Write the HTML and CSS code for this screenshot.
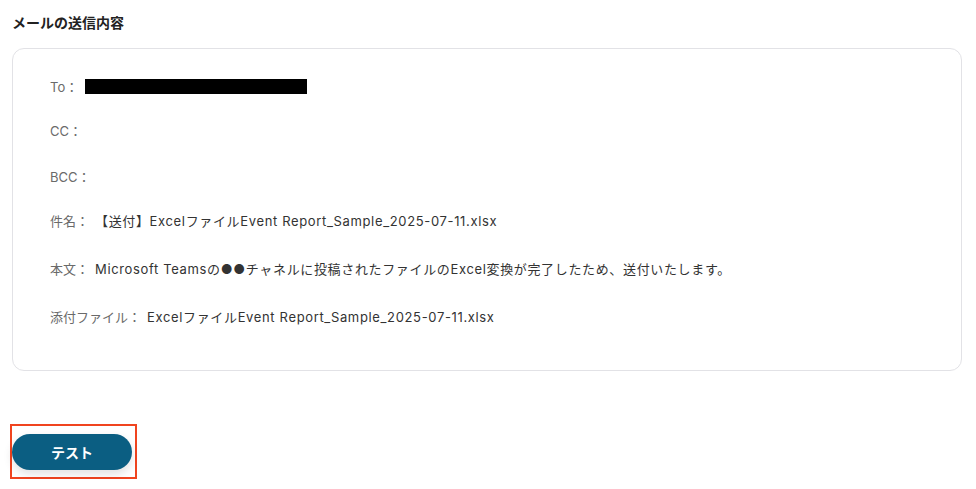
FILE: index.html
```html
<!DOCTYPE html>
<html lang="ja">
  <head>
    <meta charset="UTF-8" />
    <meta name="viewport" content="width=device-width, initial-scale=1.0" />
    <title>メールの送信内容</title>
    <link rel="stylesheet" href="styles.css">
  </head>
  <body>
    <h3 class="title">メールの送信内容</h3>

    <div class="card">
      <div class="row">
        <span class="label">To：</span>
        <span class="redacted"></span>
      </div>
      <div class="row row-wide">
        <span class="label">CC：</span>
      </div>
      <div class="row">
        <span class="label">BCC：</span>
      </div>
      <div class="row row-tall">
        <span class="label">件名：</span>
        <span class="value">【送付】ExcelファイルEvent Report_Sample_2025-07-11.xlsx</span>
      </div>
      <div class="row row-tall">
        <span class="label">本文：</span>
        <span class="value">Microsoft Teamsの●●チャネルに投稿されたファイルのExcel変換が完了したため、送付いたします。</span>
      </div>
      <div class="row">
        <span class="label">添付ファイル：</span>
        <span class="value">ExcelファイルEvent Report_Sample_2025-07-11.xlsx</span>
      </div>
    </div>

    <div class="actions">
      <div class="highlight">
        <button class="btn">テスト</button>
      </div>
    </div>
  </body>
</html>
```

FILE: styles.css
```css
body {
  margin: 0;
  padding: 0 14px 0 12px;
  background: #fff;
  font-family: Inter, "Noto Sans CJK JP", sans-serif;
  color: #333;
}
.title {
  margin: 0;
  padding-top: 12px;
  height: 36px;
  font-size: 14px;
  font-weight: 600;
  color: #222;
}
.card {
  border: 1px solid #e2e2e6;
  border-radius: 12px;
  padding: 26px 37px 43px;
}
.row {
  display: flex;
  align-items: center;
  height: 22px;
  margin-bottom: 22px;
  font-size: 13px;
}
.row-wide {
  margin-bottom: 24px;
}
.row-tall {
  margin-bottom: 26px;
}
.row:last-child {
  margin-bottom: 0;
}
.label {
  color: #6a6a6a;
  margin-right: 6px;
}
.value {
  color: #333;
  letter-spacing: 0.65px;
}
.redacted {
  display: inline-block;
  width: 222px;
  height: 15px;
  background: #000;
  margin-left: 1px;
}
.actions {
  padding-top: 53px;
}
.highlight {
  display: inline-block;
  border: 2px solid #f0441f;
  padding: 8px 3px 7px 0;
  margin-left: -2px;
}
.btn {
  display: block;
  width: 120px;
  height: 36px;
  border: none;
  border-radius: 18px;
  background: #0b5e82;
  color: #fff;
  font-family: inherit;
  font-size: 14px;
  font-weight: 700;
  box-shadow: 0 4px 10px rgba(0, 0, 0, 0.12);
}
```
